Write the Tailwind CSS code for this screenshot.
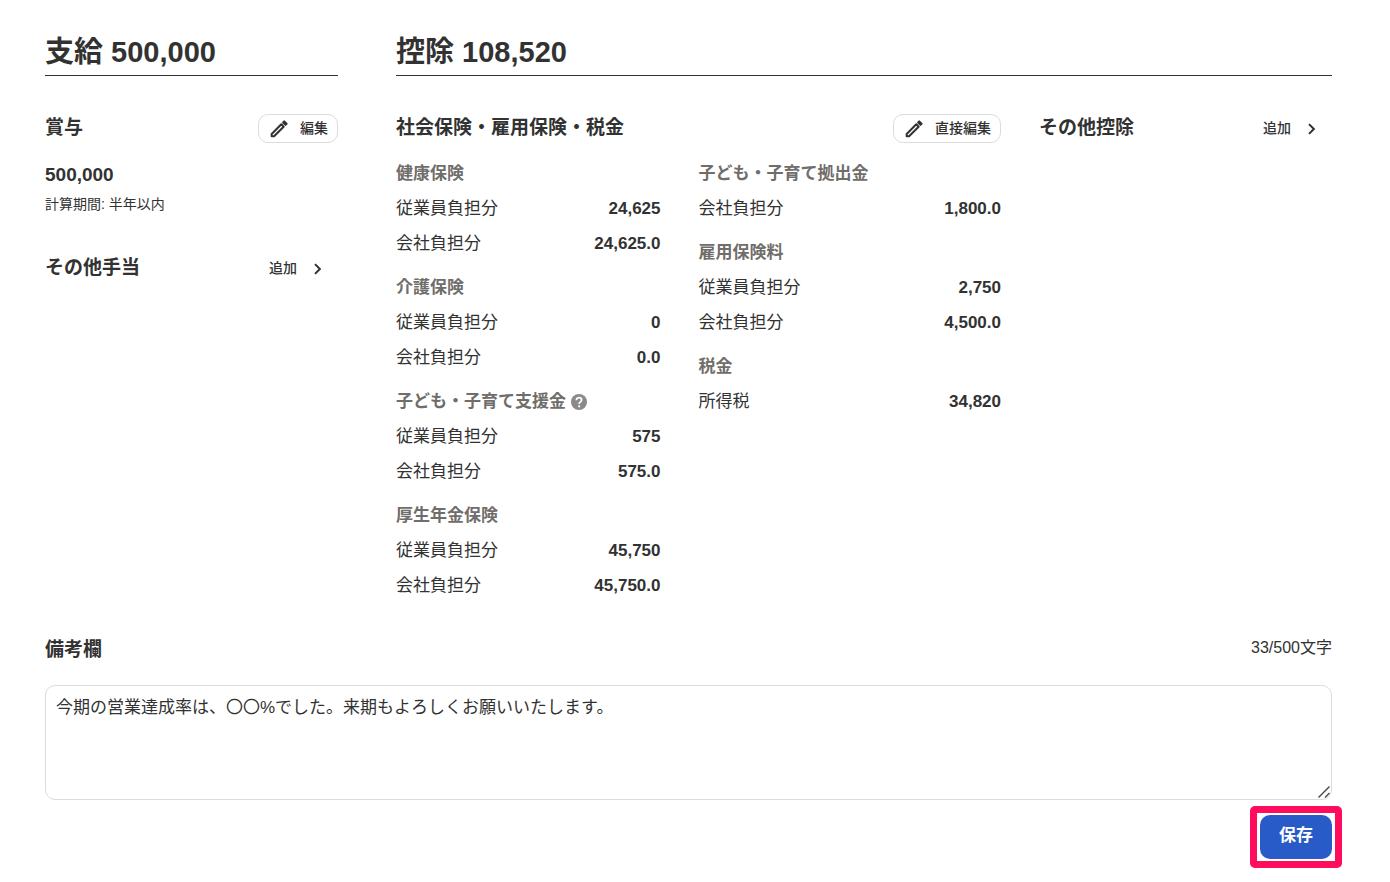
<!DOCTYPE html>
<html lang="ja">
<head>
    <meta charset="UTF-8">
    <meta name="viewport" content="width=device-width, initial-scale=1.0">
    <title>賞与明細</title>
    <script src="https://cdn.jsdelivr.net/npm/@tailwindcss/browser@4"></script>
</head>
<body class="bg-white text-[#323232] font-['Liberation_Sans','Noto_Sans_CJK_JP',sans-serif] text-[17px]">

    <main class="pl-[45px] pr-[58px] pt-[30px] pb-5">

        <div class="grid grid-cols-[293fr_936fr] gap-x-[58px]">

            <!-- Payments -->
            <section>
                <h2 class="border-b border-[#323232] pb-px text-[29px] leading-[44px] font-bold">支給 500,000</h2>

                <div class="mt-[38px] flex h-[29px] items-center justify-between">
                    <h3 class="pb-[2px] text-[19px] leading-7 font-bold">賞与</h3>
                    <button type="button" class="flex h-[29px] items-center gap-[10px] rounded-[10px] border border-[#dcdcdc] bg-white px-[9px] text-sm leading-5 font-medium">
                        <svg class="size-[22px]" viewBox="0 0 24 24" fill="none" stroke="currentColor" stroke-width="2.200" stroke-linejoin="round" aria-hidden="true">
                            <path d="M4 20v-2.600L14.500 6.900l2.600 2.600L6.600 20z"/>
                            <path d="M16.500 4.900l1.200-1.200 2.600 2.600-1.200 1.200z" fill="currentColor"/>
                        </svg>
                        <span class="pb-[2px]">編集</span>
                    </button>
                </div>
                <p class="mt-[18px] text-[19px] leading-7 font-bold">500,000</p>
                <p class="mt-[3px] text-sm leading-6">計算期間: 半年以内</p>

                <div class="mt-[38px] flex h-[29px] items-center justify-between">
                    <h3 class="pb-[2px] text-[19px] leading-7 font-bold">その他手当</h3>
                    <button type="button" class="flex h-[29px] items-center gap-3 pr-[11px] text-sm leading-5 font-medium">
                        <span class="pb-[2px]">追加</span>
                        <svg class="size-[18px]" viewBox="0 0 24 24" fill="none" stroke="currentColor" stroke-width="2.700" aria-hidden="true">
                            <path d="M8 5.500l6.500 6.500L8 18.500"/>
                        </svg>
                    </button>
                </div>
            </section>

            <!-- Deductions -->
            <section>
                <h2 class="border-b border-[#323232] pb-px text-[29px] leading-[44px] font-bold">控除 108,520</h2>

                <div class="mt-[38px] grid grid-cols-[605fr_293fr] gap-x-[38px]">
                    <div>
                        <div class="flex h-[29px] items-center justify-between">
                            <h3 class="pb-[2px] text-[19px] leading-7 font-bold">社会保険・雇用保険・税金</h3>
                            <button type="button" class="flex h-[29px] items-center gap-[10px] rounded-[10px] border border-[#dcdcdc] bg-white px-[9px] text-sm leading-5 font-medium">
                                <svg class="size-[22px]" viewBox="0 0 24 24" fill="none" stroke="currentColor" stroke-width="2.200" stroke-linejoin="round" aria-hidden="true">
                                    <path d="M4 20v-2.600L14.500 6.900l2.600 2.600L6.600 20z"/>
                                    <path d="M16.500 4.900l1.200-1.200 2.600 2.600-1.200 1.200z" fill="currentColor"/>
                                </svg>
                                <span class="pb-[2px]">直接編集</span>
                            </button>
                        </div>

                        <div class="mt-[13px] grid grid-cols-2 leading-[35px]">
                            <div class="flex flex-col gap-[9px] pr-[38px]">
                                <div>
                                    <h4 class="font-bold text-[#706d6a]">健康保険</h4>
                                    <dl>
                                        <div class="flex justify-between"><dt>従業員負担分</dt><dd class="font-bold">24,625</dd></div>
                                        <div class="flex justify-between"><dt>会社負担分</dt><dd class="font-bold">24,625.0</dd></div>
                                    </dl>
                                </div>
                                <div>
                                    <h4 class="font-bold text-[#706d6a]">介護保険</h4>
                                    <dl>
                                        <div class="flex justify-between"><dt>従業員負担分</dt><dd class="font-bold">0</dd></div>
                                        <div class="flex justify-between"><dt>会社負担分</dt><dd class="font-bold">0.0</dd></div>
                                    </dl>
                                </div>
                                <div>
                                    <div class="flex items-center gap-1">
                                        <h4 class="font-bold text-[#706d6a]">子ども・子育て支援金</h4>
                                        <button type="button" aria-label="ヘルプ" class="text-[#8c8989]">
                                            <svg class="size-[18px]" viewBox="0 0 24 24" aria-hidden="true">
                                                <circle cx="12" cy="12" r="10.700" fill="currentColor"/>
                                                <path d="M8.500 9.600c0-2 1.500-3.400 3.500-3.400s3.500 1.300 3.500 3.100c0 2.400-3.300 2.700-3.300 5.200" fill="none" stroke="#fff" stroke-width="2.400"/>
                                                <circle cx="12.200" cy="17.700" r="1.500" fill="#fff"/>
                                            </svg>
                                        </button>
                                    </div>
                                    <dl>
                                        <div class="flex justify-between"><dt>従業員負担分</dt><dd class="font-bold">575</dd></div>
                                        <div class="flex justify-between"><dt>会社負担分</dt><dd class="font-bold">575.0</dd></div>
                                    </dl>
                                </div>
                                <div>
                                    <h4 class="font-bold text-[#706d6a]">厚生年金保険</h4>
                                    <dl>
                                        <div class="flex justify-between"><dt>従業員負担分</dt><dd class="font-bold">45,750</dd></div>
                                        <div class="flex justify-between"><dt>会社負担分</dt><dd class="font-bold">45,750.0</dd></div>
                                    </dl>
                                </div>
                            </div>

                            <div class="flex flex-col gap-[9px]">
                                <div>
                                    <h4 class="font-bold text-[#706d6a]">子ども・子育て拠出金</h4>
                                    <dl>
                                        <div class="flex justify-between"><dt>会社負担分</dt><dd class="font-bold">1,800.0</dd></div>
                                    </dl>
                                </div>
                                <div>
                                    <h4 class="font-bold text-[#706d6a]">雇用保険料</h4>
                                    <dl>
                                        <div class="flex justify-between"><dt>従業員負担分</dt><dd class="font-bold">2,750</dd></div>
                                        <div class="flex justify-between"><dt>会社負担分</dt><dd class="font-bold">4,500.0</dd></div>
                                    </dl>
                                </div>
                                <div>
                                    <h4 class="font-bold text-[#706d6a]">税金</h4>
                                    <dl>
                                        <div class="flex justify-between"><dt>所得税</dt><dd class="font-bold">34,820</dd></div>
                                    </dl>
                                </div>
                            </div>
                        </div>
                    </div>

                    <div>
                        <div class="flex h-[29px] items-center justify-between">
                            <h3 class="pb-[2px] text-[19px] leading-7 font-bold">その他控除</h3>
                            <button type="button" class="flex h-[29px] items-center gap-3 pr-[11px] text-sm leading-5 font-medium">
                                <span class="pb-[2px]">追加</span>
                                <svg class="size-[18px]" viewBox="0 0 24 24" fill="none" stroke="currentColor" stroke-width="2.700" aria-hidden="true">
                                    <path d="M8 5.500l6.500 6.500L8 18.500"/>
                                </svg>
                            </button>
                        </div>
                    </div>
                </div>
            </section>
        </div>

        <!-- Remarks -->
        <form>
            <div class="mt-[33px] flex justify-between">
                <label for="remarks" class="text-[19px] leading-7 font-bold">備考欄</label>
                <span class="text-base">33/500文字</span>
            </div>
            <div class="relative mt-[21px]">
                <textarea id="remarks" class="block h-[115px] w-full resize-y rounded-[10px] border border-[#dcdcdc] px-[10px] py-2 leading-7 focus:outline-none focus:ring-2 focus:ring-blue-400 [&::-webkit-resizer]:hidden">今期の営業達成率は、〇〇%でした。来期もよろしくお願いいたします。</textarea>
                <!-- Resize grip -->
                <svg class="pointer-events-none absolute right-[2px] bottom-[2px] size-3" viewBox="0 0 12 12" fill="none" stroke="#505050" stroke-width="1.500" aria-hidden="true">
                    <path d="M.5 11.500l11-11M7 11.500l4.500-4.500"/>
                </svg>
            </div>

            <div class="mt-[15px] flex justify-end">
                <div class="relative">
                    <button type="button" class="h-11 w-[72px] rounded-[10px] bg-[#285ac8] pb-[2px] font-bold text-white hover:bg-[#1e46aa]">保存</button>
                    <!-- Highlight frame around the save button -->
                    <div class="pointer-events-none absolute -inset-x-[10px] -inset-y-[9px] rounded-[5px] border-7 border-[#ff0c5c]"></div>
                </div>
            </div>
        </form>
    </main>

</body>
</html>
